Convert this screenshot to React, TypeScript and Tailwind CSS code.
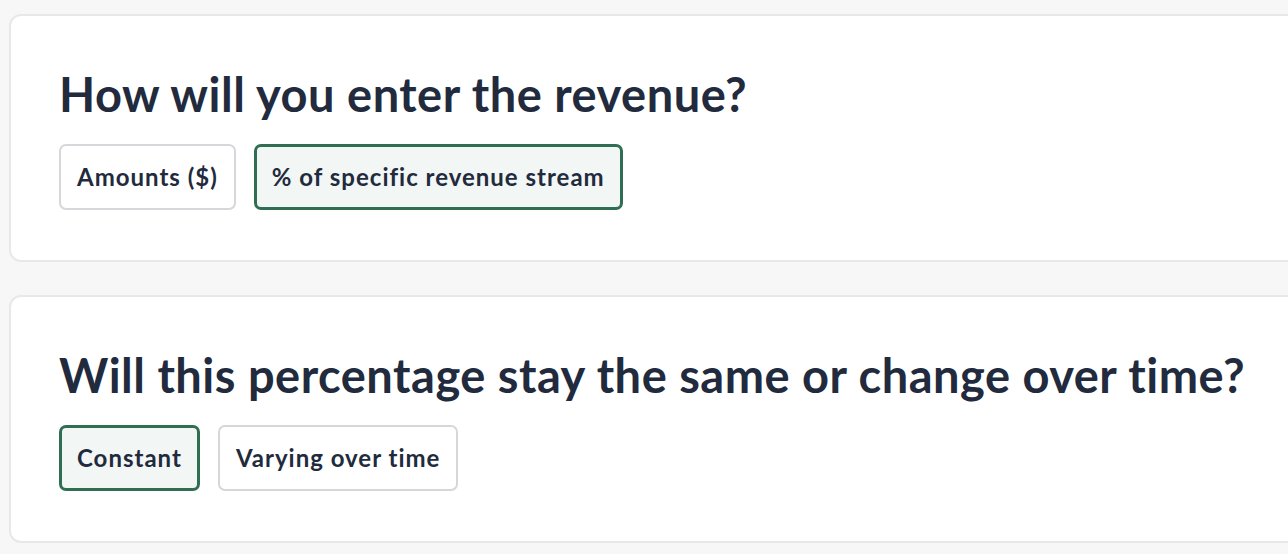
import { useState } from "react";

type ChoiceProps = {
  label: string;
  selected: boolean;
  onClick: () => void;
};

const Choice: React.FC<ChoiceProps> = ({ label, selected, onClick }) => {
  return (
    <button
      onClick={onClick}
      className={
        selected
          ? "h-[66px] px-[15px] rounded-[7px] border-[3px] border-[#2f6e52] bg-[#f2f6f4] text-[24px] tracking-[1px] font-bold text-[#222b3d]"
          : "h-[66px] px-[16px] rounded-[7px] border-2 border-[#d7d7db] bg-white text-[24px] tracking-[1px] font-bold text-[#222b3d]"
      }
    >
      {label}
    </button>
  );
};

type QuestionProps = {
  title: string;
  options: string[];
  value: number;
  setValue: (i: number) => void;
};

const Question: React.FC<QuestionProps> = ({ title, options, value, setValue }) => {
  return (
    <div className="w-[1310px] h-[248px] shrink-0 rounded-[12px] border-2 border-[#e7e8e8] bg-white pl-[48px] pt-[48px]">
      <h2 className="text-[47px] leading-[60px] tracking-[0.5px] font-bold text-[#222b3d]">{title}</h2>
      <div className="flex gap-[18px] mt-[20px]">
        {options.map((o, i) => (
          <Choice key={o} label={o} selected={value === i} onClick={() => setValue(i)} />
        ))}
      </div>
    </div>
  );
};

export default function App() {
  const [entry, setEntry] = useState(1);
  const [mode, setMode] = useState(0);
  return (
    <div
      className="w-full h-[554px] overflow-hidden bg-[#f6f7f6] pl-[9px] pt-[14px] flex flex-col gap-[33px]"
      style={{ fontFamily: "Lato, 'Noto Sans', sans-serif" }}
    >
      <Question
        title="How will you enter the revenue?"
        options={["Amounts ($)", "% of specific revenue stream"]}
        value={entry}
        setValue={setEntry}
      />
      <Question
        title="Will this percentage stay the same or change over time?"
        options={["Constant", "Varying over time"]}
        value={mode}
        setValue={setMode}
      />
    </div>
  );
}
